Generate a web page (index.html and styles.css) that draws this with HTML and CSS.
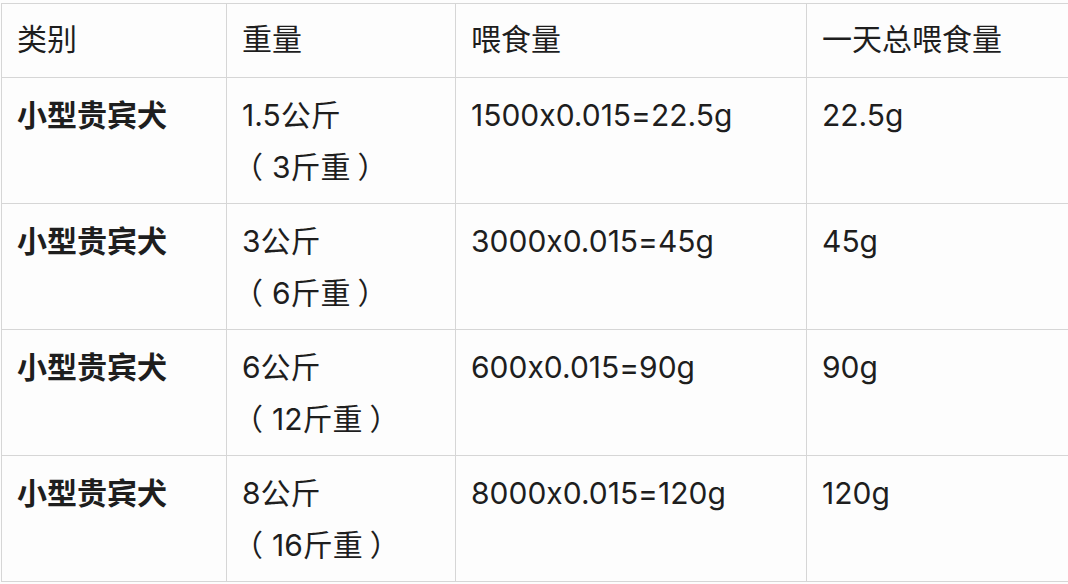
FILE: index.html
```html
<!DOCTYPE html>
<html lang="zh">
<head>
<meta charset="utf-8">
<link rel="stylesheet" href="styles.css">
</head>
<body>
<table class="feed">
  <colgroup>
    <col class="c1"><col class="c2"><col class="c3"><col class="c4">
  </colgroup>
  <thead>
    <tr><th>类别</th><th>重量</th><th>喂食量</th><th>一天总喂食量</th></tr>
  </thead>
  <tbody>
    <tr><td class="kind">小型贵宾犬</td><td>1.5公斤<br><span class="po">（</span>3斤重<span class="pc">）</span></td><td>1500x0.015=22.5g</td><td>22.5g</td></tr>
    <tr><td class="kind">小型贵宾犬</td><td>3公斤<br><span class="po">（</span>6斤重<span class="pc">）</span></td><td>3000x0.015=45g</td><td>45g</td></tr>
    <tr><td class="kind">小型贵宾犬</td><td>6公斤<br><span class="po">（</span>12斤重<span class="pc">）</span></td><td>600x0.015=90g</td><td>90g</td></tr>
    <tr><td class="kind">小型贵宾犬</td><td>8公斤<br><span class="po">（</span>16斤重<span class="pc">）</span></td><td>8000x0.015=120g</td><td>120g</td></tr>
  </tbody>
</table>
</body>
</html>
```
FILE: styles.css
```css
html, body {
  margin: 0;
  padding: 0;
  background: #fdfdfd;
  overflow: hidden;
}
body {
  padding: 3px 0 0 1px;
  font-family: "Inter", "Noto Sans CJK TC", "Noto Sans", sans-serif;
  font-feature-settings: "calt" 0;
  color: #1e1e1e;
}
.feed {
  border-collapse: collapse;
  table-layout: fixed;
  width: 1100px;
}
.c1 { width: 225px; }
.c2 { width: 229px; }
.c3 { width: 351px; }
.c4 { width: 295px; }
.feed th, .feed td {
  border: 1px solid #d6d6d6;
  font-size: 30px;
  line-height: 52px;
  text-align: left;
  vertical-align: top;
  white-space: nowrap;
}
.feed th {
  font-weight: 400;
  height: 52px;
  padding: 9px 15px 12px;
}
.feed td {
  height: 104px;
  padding: 11px 15px 10px;
}
.feed td.kind {
  font-weight: 700;
}
.po {
  margin-left: -9px;
  margin-right: 9px;
}
.pc {
  margin-left: 7px;
}
```
